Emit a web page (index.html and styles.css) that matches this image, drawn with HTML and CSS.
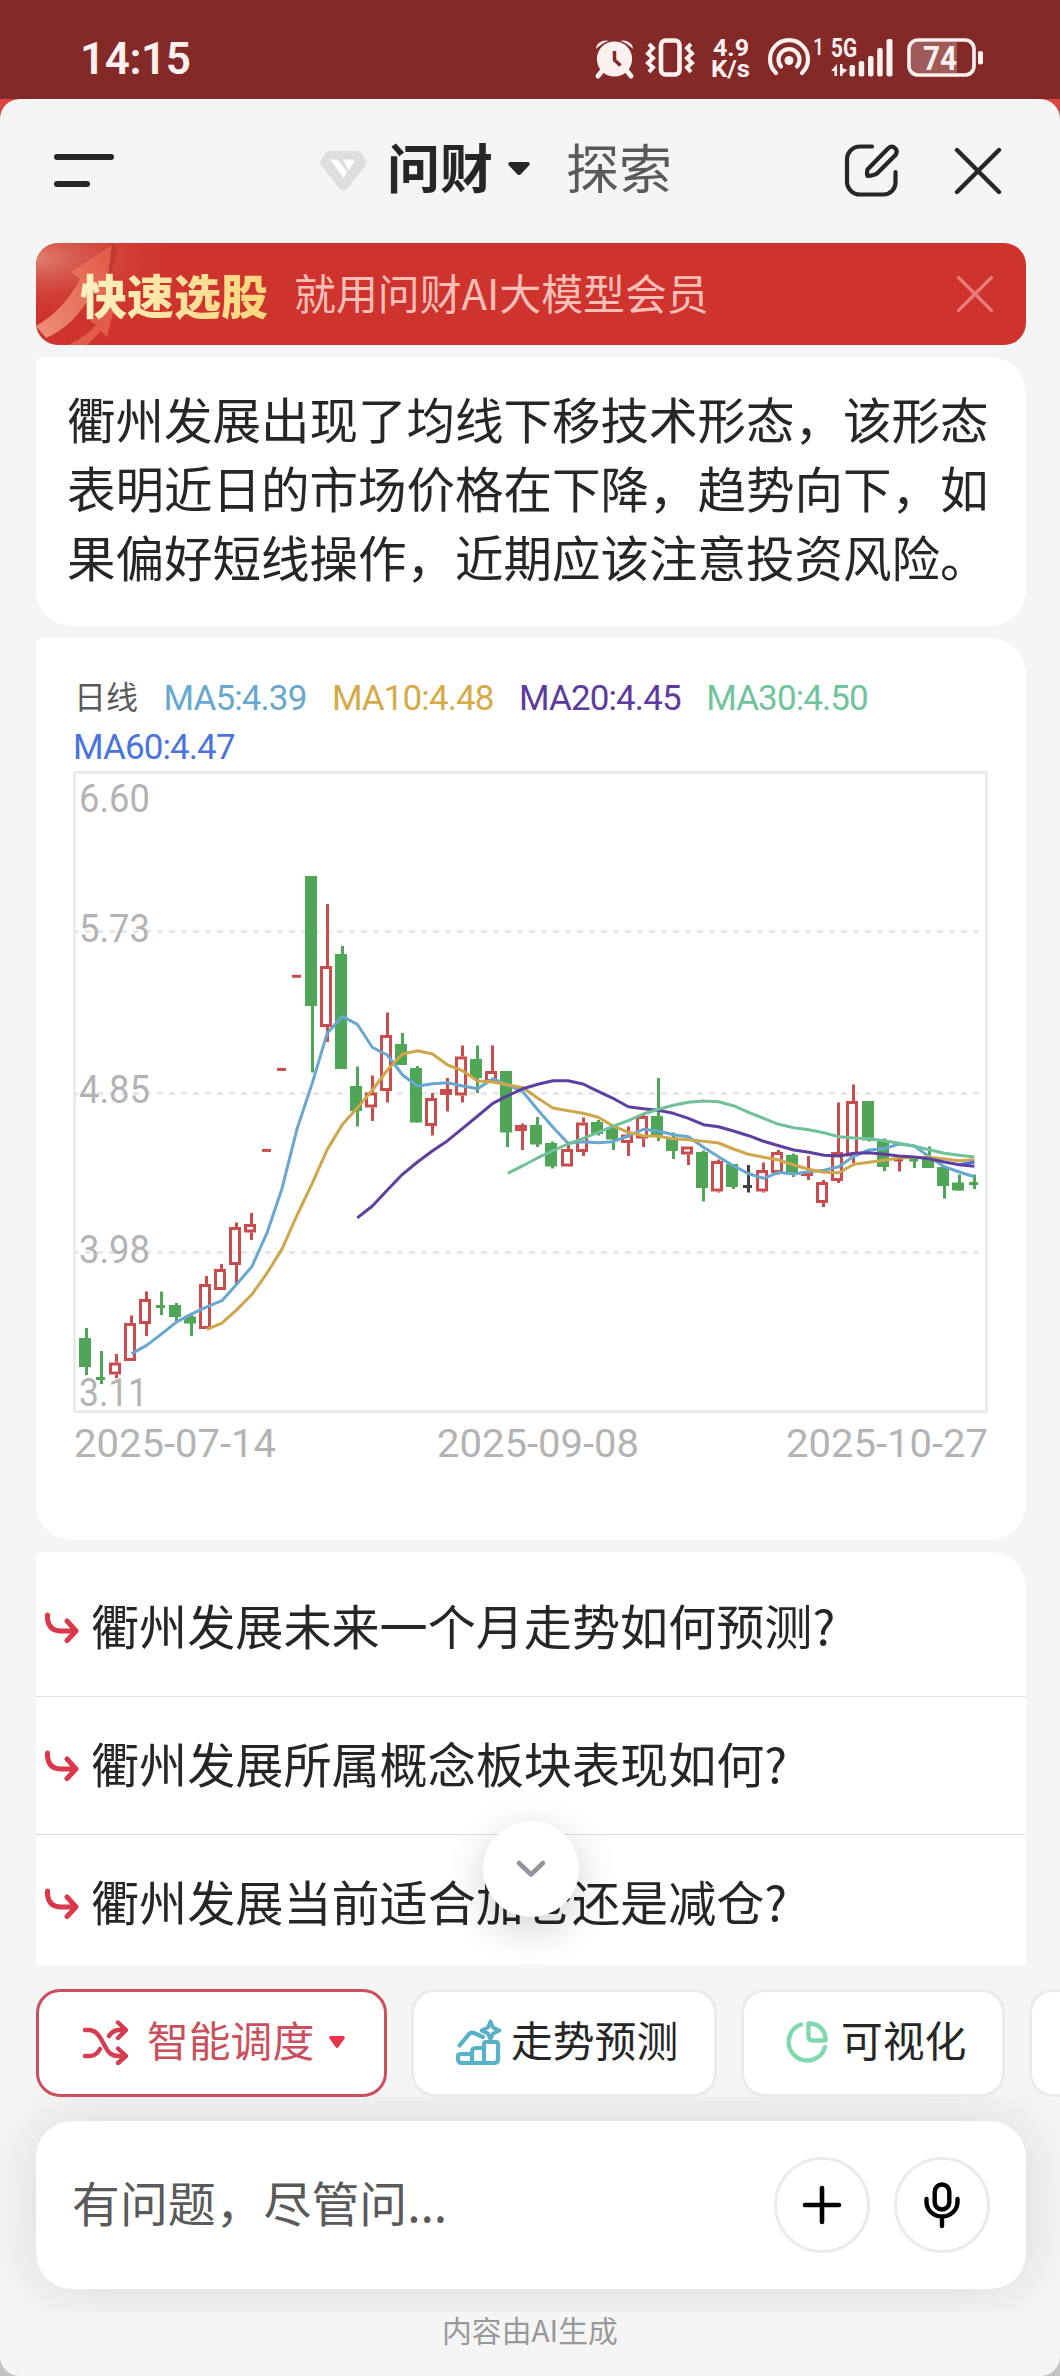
FILE: index.html
```html
<!DOCTYPE html>
<html lang="zh-CN">
<head>
<meta charset="utf-8">
<title>问财</title>
<link rel="stylesheet" href="styles.css">
</head>
<body>
<div class="phone">
  <div class="status">
    <span class="time">14:15</span>
    <svg class="status-icons" viewBox="590 30 400 54" width="400" height="54">
      <g fill="#fdf1f0">
        <circle cx="614.5" cy="59" r="17.6"/>
        <path d="M602 71l-4 5M627 71l4 5" stroke="#fdf1f0" stroke-width="5" stroke-linecap="round"/>
        <path d="M596 49c0-6 7-10 13-8c-5 1-9 4-13 8zM633 49c0-6-7-10-13-8c5 1 9 4 13 8z"/>
      </g>
      <path d="M614.5 51v9l6 5.500" fill="none" stroke="#832927" stroke-width="3.500"/>
      <g fill="none" stroke="#fdf1f0" stroke-width="4">
        <rect x="661" y="40.500" width="18.500" height="34" rx="4.500" stroke-width="4.600"/>
        <path d="M649 44l4 4-5 5.500 5 4.500-5 5 5 4.500-4 4.500M691 44l-4 4 5 5.500-5 4.500 5 5-5 4.500 4 4.500"/>
      </g>
      <g fill="#fdf1f0" font-family="Roboto, sans-serif" font-weight="700">
        <text x="713" y="56" font-size="23.500" textLength="36" lengthAdjust="spacingAndGlyphs">4.9</text>
        <text x="711" y="77" font-size="23" textLength="39" lengthAdjust="spacingAndGlyphs">K/s</text>
        <text x="813" y="55" font-size="24" textLength="11" lengthAdjust="spacingAndGlyphs" font-weight="500">1</text>
        <text x="831" y="57" font-size="25" textLength="26" lengthAdjust="spacingAndGlyphs">5G</text>
      </g>
      <g fill="none" stroke="#fdf1f0" stroke-width="4.200" stroke-linecap="round">
        <path d="M776 73a19 19 0 1 1 26 0"/>
        <path d="M781 66.500a10.500 10.500 0 1 1 16 0"/>
      </g>
      <circle cx="789" cy="60.500" r="4.500" fill="#fdf1f0"/>
      <g fill="#fdf1f0">
        <path d="M831 71l6-7v12h-2.500v-5zM840 64v12h2.500v-2l5-4-5-2v-4z"/>
        <rect x="849.500" y="65" width="5.500" height="11.500" rx="2"/>
        <rect x="858.700" y="61" width="5.500" height="15.500" rx="2"/>
        <rect x="868" y="56" width="5.500" height="20.500" rx="2"/>
        <rect x="877.200" y="48" width="5.500" height="28.500" rx="2"/>
        <rect x="886.500" y="39" width="6" height="37.500" rx="2"/>
      </g>
      <path d="M918 42h39v31h-39a7 7 0 0 1-7-7V49a7 7 0 0 1 7-7z" fill="#a05a58"/>
      <rect x="909" y="40" width="65" height="35" rx="9" fill="none" stroke="#fdf1f0" stroke-width="3.600"/>
      <rect x="978" y="51" width="5" height="13.500" rx="2" fill="#fdf1f0"/>
      <text x="923" y="70" font-family="Roboto, sans-serif" font-weight="700" font-size="34" textLength="34" lengthAdjust="spacingAndGlyphs" fill="#fdf1f0">74</text>
    </svg>
  </div>

  <div class="sheet-back">
  <div class="sheet">
    <header class="header">
      <svg class="menu" viewBox="0 0 60 36" width="60" height="36"><path d="M3 6h54M3 33h30" stroke="#262626" stroke-width="6" stroke-linecap="round"/></svg>
      <svg class="brand" viewBox="0 0 47 40" width="47" height="40">
        <path d="M10 0h27q3 0 4.500 2l4.500 7q1.500 3 0 5L28 37q-2 2.500-4.500 2.500T19 37L1 14q-1.500-2.500 0-5l4.500-7Q7 0 10 0z" fill="#dedede"/>
        <path d="M10 8.500h5.500q2 0 3 1.300L27 21l-3.500 6z" fill="#fff"/>
        <path d="M23 8.500h10q2 .5 1 2.500l-5.500 8.500z" fill="#fff"/>
      </svg>
      <span class="tab tab-on">问财</span>
      <svg class="tab-caret" viewBox="0 0 22 14" width="22" height="14"><path d="M2 0h18q3 1 1 3.500L13 12q-2 2-4 0L1 3.500Q-1 1 2 0z" fill="#262626"/></svg>
      <span class="tab">探索</span>
      <svg class="edit" viewBox="0 0 56 56" width="56" height="56" fill="none" stroke="#262626" stroke-width="4.200" stroke-linecap="round" stroke-linejoin="round">
        <path d="M28 3.500H16A13 13 0 0 0 3 16.500v22A13 13 0 0 0 16 51.500h23.500a12 12 0 0 0 12-12V29"/>
        <path d="M23.500 26.500L44 5.500c5-4.500 11 1 7.500 6.500L33 30.500q-3 2-9.500 2.500-1-3 0-6.500z"/>
      </svg>
      <svg class="close" viewBox="0 0 48 48" width="48" height="48"><path d="M3 3l42 42M45 3L3 45" stroke="#262626" stroke-width="4.400" stroke-linecap="round"/></svg>
    </header>

    <main class="feed">
      <div class="banner">
        <svg class="banner-art" viewBox="0 0 240 102" width="240" height="102">
          <defs>
            <radialGradient id="glow" cx="0" cy="0.150" r="0.600"><stop offset="0" stop-color="#e08070"/><stop offset="1" stop-color="#ce342d" stop-opacity="0"/></radialGradient>
            <linearGradient id="arrow" x1="0" y1="1" x2="1" y2="0"><stop offset="0" stop-color="#f19a80"/><stop offset="1" stop-color="#e55a45"/></linearGradient>
          </defs>
          <rect width="240" height="102" fill="url(#glow)"/>
          <path d="M4 97Q38 82 57 51l11 10L81 7l-5-6z" fill="#b8352a" opacity=".7"/>
          <path d="M0 83Q28 67 44 36l-9-7L76 2 69 57l-12-8Q38 83 10 95z" fill="url(#arrow)" opacity=".9"/>
          <path d="M32 102q20-10 28-20l-6-4 26-20-9 36-6-6q-8 8-14 14z" fill="#e05c49"/>
        </svg>
        <strong class="banner-title">快速选股</strong>
        <span class="banner-text">就用问财AI大模型会员</span>
        <svg class="banner-close" viewBox="0 0 38 38" width="38" height="38"><path d="M2.500 2.500l33 33M35.500 2.500l-33 33" stroke="#e77c79" stroke-width="3.200" stroke-linecap="round"/></svg>
      </div>

      <section class="card summary">衢州发展出现了均线下移技术形态，该形态表明近日的市场价格在下降，趋势向下，如果偏好短线操作，近期应该注意投资风险。</section>

      <section class="card chart-card">
        <div class="legend">
          <span class="lg-day">日线</span>
          <span class="lg ma5">MA5:4.39</span>
          <span class="lg ma10">MA10:4.48</span>
          <span class="lg ma20">MA20:4.45</span>
          <span class="lg ma30">MA30:4.50</span>
          <span class="lg ma60">MA60:4.47</span>
        </div>
        <svg id="chart" class="chart" viewBox="72 770 918 700" width="918" height="700"></svg>
      </section>

      <section class="card questions">
        <div class="question"><svg class="turn" viewBox="0 0 36 32" width="36" height="32"><path d="M3.500 3v4Q5 19 17 19h13M23 9l9 10-9 9.500" /></svg><span>衢州发展未来一个月走势如何预测?</span></div>
        <div class="question"><svg class="turn" viewBox="0 0 36 32" width="36" height="32"><path d="M3.500 3v4Q5 19 17 19h13M23 9l9 10-9 9.500" /></svg><span>衢州发展所属概念板块表现如何?</span></div>
        <div class="question question-last"><svg class="turn" viewBox="0 0 36 32" width="36" height="32"><path d="M3.500 3v4Q5 19 17 19h13M23 9l9 10-9 9.500" /></svg><span>衢州发展当前适合加仓还是减仓?</span></div>
        <div class="scroll-down"><svg viewBox="0 0 32 20" width="32" height="20"><path d="M4 4l12 11.500L28 4" fill="none" stroke="#93949b" stroke-width="4.600" stroke-linecap="round" stroke-linejoin="round"/></svg></div>
      </section>
    </main>

    <div class="chips">
      <div class="chip chip-on">
        <svg viewBox="0 0 46 46" width="46" height="46" fill="none" stroke="#d63c50" stroke-width="4.400" stroke-linecap="round" stroke-linejoin="round">
          <path d="M3 11h4q7 0 12 9l5 9q4 8 12 8h7M3 37h5q6 0 10-7M27 17q3-5 9-6h7M36 3.500l8 7.500-8 8M36 29.500l8 7.500-8 7"/>
        </svg>
        <span>智能调度</span>
        <svg class="chip-caret" viewBox="0 0 16 14" width="16" height="14"><path d="M1.500 0h13q2 1 1 2.500L9.500 11q-1.500 2-3 0L.5 2.500Q-.5 1 1.500 0z" fill="#e8344a"/></svg>
      </div>
      <div class="chip chip-trend">
        <svg viewBox="0 0 46 46" width="46" height="46" fill="none" stroke="#58b1c9" stroke-width="4.200" stroke-linecap="round" stroke-linejoin="round">
          <path d="M3.500 26.500L13 15q2-2 5-1l9 4"/>
          <path d="M34.500 2.500l2.500 6 6.500 3-6.500 3-2.500 6-2.500-6-6.500-3 6.500-3z" stroke-width="3.800"/>
          <path d="M16 44V33q0-4 4-4h8V25q0-2 2-2h10q2 0 2 2v15q0 4-4 4H6q-4 0-4-4v-3q0-2 3-2h11M28 29v15"/>
        </svg>
        <span>走势预测</span>
      </div>
      <div class="chip chip-visual">
        <svg viewBox="0 0 46 46" width="46" height="46" fill="none" stroke="#80d9ae" stroke-width="4.400" stroke-linecap="round" stroke-linejoin="round">
          <path d="M17 5.500A18.500 18.500 0 1 0 41 28"/>
          <path d="M24.500 4.500v13q0 4 4 4H41.500C42 11 34 4 24.500 4.500z"/>
        </svg>
        <span>可视化</span>
      </div>
      <div class="chip chip-next"></div>
    </div>

    <div class="composer">
      <div class="input">
        <span class="placeholder">有问题，尽管问...</span>
        <div class="round"><svg viewBox="0 0 40 40" width="40" height="40"><path d="M20 3v34M3 20h34" stroke="#000" stroke-width="4.600" stroke-linecap="round"/></svg></div>
        <div class="round"><svg viewBox="0 0 40 48" width="40" height="48" fill="none" stroke="#000" stroke-width="4.400" stroke-linecap="round"><rect x="12.700" y="3.500" width="14.600" height="25" rx="7.300"/><path d="M4.500 18v3a15.500 14.500 0 0 0 31 0v-3M20 36v9"/></svg></div>
      </div>
    </div>
    <footer class="note">内容由AI生成</footer>
  </div>
  </div>
</div>
<script src="chart.js"></script>
</body>
</html>
```
FILE: styles.css
```css
* { box-sizing: border-box; }
body {
  margin: 0;
  font-family: "Noto Sans CJK SC", sans-serif;
  color: #262626;
}
svg { display: block; flex: none; }
.phone { width: 1060px; height: 2376px; overflow: hidden; display: flex; flex-direction: column; background: #c9c9c9; }

.status { height: 99px; flex: none; background: #832927; display: flex; justify-content: space-between; align-items: center; padding: 15px 70px 0 80px; }
.time { font-family: Roboto, sans-serif; font-weight: 600; font-size: 44px; line-height: 54px; letter-spacing: -0.400px; color: #fdf1f0; padding-top: 3px; }

.sheet-back { flex: 1; background: linear-gradient(#d9453f 0 60px, #c4c4c4 60px); }
.sheet { height: 2277px; background: #f5f5f5; border-radius: 20px; overflow: hidden; display: flex; flex-direction: column; }

.header { height: 144px; flex: none; display: flex; align-items: center; padding: 0 58px 0 54px; }
.menu { margin-bottom: 4px; }
.brand { margin-left: 206px; }
.tab { font-size: 53px; line-height: 60px; color: #5a5a5a; margin-bottom: 11px; }
.tab-on { font-weight: 700; color: #262626; margin-left: 20px; }
.tab-caret { margin: 0 36px 4px 15px; }
.edit { margin-left: auto; margin-right: 2px; }
.close { margin-left: 52px; }

.feed { height: 1722px; flex: none; padding: 0 34px 0 36px; display: flex; flex-direction: column; gap: 12px; }

.banner { position: relative; height: 102px; flex: none; border-radius: 22px; overflow: hidden; background: #ce342d; display: flex; align-items: center; padding: 0 32px 0 44px; }
.banner-art { position: absolute; left: 0; top: 0; }
.banner-title { position: relative; font-size: 47px; line-height: 60px; font-weight: 900; background: linear-gradient(90deg, #fff0c4, #fbd67a); -webkit-background-clip: text; background-clip: text; color: transparent; }
.banner-text { margin-left: 26px; margin-bottom: 4px; font-size: 41.900px; line-height: 60px; color: #fbbfb8; }
.banner-close { margin-left: auto; }

.card { background: #fff; border-radius: 6px 36px 36px 36px; flex: none; }
.summary { height: 269px; padding: 27px 30px 0 31px; font-size: 48.500px; line-height: 69px; word-break: break-all; }

.chart-card { height: 902px; padding: 36px 36px 0; }
.legend { display: flex; flex-wrap: wrap; column-gap: 25.500px; height: 96px; font-family: Roboto, "Noto Sans CJK SC", sans-serif; font-size: 35px; line-height: 49px; padding-left: 1px; }
.lg-day { font-size: 32px; color: #5a5a5a; margin-left: 1px; }
.lg { letter-spacing: -0.900px; }
.ma5 { color: #68a7cf; }
.ma10 { color: #d6aa48; }
.ma20 { color: #5d3b9e; }
.ma30 { color: #70c49b; }
.ma60 { color: #4a74dc; }
.chart text { font-family: Roboto, sans-serif; font-size: 38px; fill: #b3b3b3; }

.questions { position: relative; height: 413px; border-radius: 6px 36px 0 0; padding-top: 7px; }
.question { height: 138px; display: flex; align-items: center; padding-left: 8px; font-size: 48.100px; line-height: 60px; border-bottom: 1px solid #dedede; }
.question span { margin: 0 0 8px 11px; }
.question-last { border-bottom: 0; height: 130px; padding-top: 8px; }
.turn { fill: none; stroke: #dc384c; stroke-width: 5; stroke-linecap: round; stroke-linejoin: round; }
.scroll-down { position: absolute; left: 447px; top: 269px; width: 96px; height: 96px; border-radius: 50%; background: #fff; box-shadow: 0 12px 42px rgba(0, 0, 0, .19); display: flex; align-items: center; justify-content: center; }

.chips { height: 132px; flex: none; display: flex; gap: 24px; padding: 24px 0 0 36px; }
.chip { height: 108px; flex: none; display: flex; align-items: center; background: #fff; border: 3px solid #ebebeb; border-radius: 24px; font-size: 41.800px; line-height: 60px; }
.chip span { margin-bottom: 9px; }
.chip svg { margin-bottom: 2px; }
.chip-on { width: 351px; border-color: #c9505c; color: #c9505c; padding-left: 43px; gap: 19px; }
.chip .chip-caret { margin: 0 0 0 -4px; }
.chip-trend { width: 306px; padding-left: 42px; gap: 9px; }
.chip-visual { width: 264px; padding-left: 40px; gap: 11px; }
.chip-next { width: 200px; }

.composer { height: 215px; flex: none; overflow: hidden; padding: 24px 34px 0 36px; }
.input { height: 168px; border-radius: 36px; background: #fff; box-shadow: 0 0 60px rgba(0, 0, 0, .12); display: flex; align-items: center; padding: 0 36px 0 36px; gap: 24px; }
.placeholder { flex: 1; font-size: 47.900px; line-height: 60px; color: #5a5a5a; margin-bottom: 9px; }
.round { width: 96px; height: 96px; border: 3px solid #ebebeb; border-radius: 50%; display: flex; align-items: center; justify-content: center; }
.note { text-align: center; font-size: 29.800px; line-height: 34px; color: #999; }
```
FILE: chart.js
```js
const X0 = 86.4, STEP = 15.05;
// kind (r: rise, g: fall, d: doji green, e: doji red, k: flat), body top, body bottom, wick top, wick bottom
const candles = [
  ['g',1338,1367,1328,1375],['d',1378.5,0,1351,1384],['r',1362.500,1374.500,1354,1378],['r',1323,1361,1315.500,1361],
  ['r',1299,1324,1291.500,1336],['d',1306.500,0,1291.500,1315],['g',1305,1317,1303,1322],['g',1316.500,1323.500,1313,1336],
  ['r',1284,1329,1276,1329],['r',1269,1290,1264,1290],['r',1227,1265,1222.500,1285],['r',1224,1232.500,1213,1240],
  ['e',1150.400,0,0,0],['e',1069.400,0,0,0],['e',976.300,0,0,0],
  ['g',876,1006,876,1072.500],['r',966,1027,904,1042],['g',954,1069,946,1069],['g',1086,1111,1066.500,1126.500],
  ['r',1092.500,1107.500,1075.500,1121],['r',1035,1091,1012.500,1102.500],['g',1044,1065,1033,1065],['g',1068,1122.500,1066,1122.500],
  ['r',1098,1126,1093,1135.500],['r',1089,1095,1078,1111.500],['r',1056.500,1095.500,1045.500,1102.500],['g',1059,1078,1045.500,1093],
  ['r',1071,1082,1045.500,1082],['g',1071,1132.500,1071,1147],['r',1125,1131,1123.500,1150],['g',1125,1144.500,1117,1147],
  ['g',1143,1166.500,1141.500,1168.500],['r',1149,1166.500,1143,1166.500],['r',1122.500,1152,1117.500,1156],['g',1122,1134,1120,1135.500],
  ['g',1127.500,1139.500,1127.500,1150],['r',1134.500,1143,1126.500,1156],['r',1116,1138.500,1113,1147],['g',1116,1135.500,1078,1141],
  ['g',1137.500,1151,1132.500,1159],['r',1146.500,1154.500,1146.500,1165],['g',1152,1188,1150.500,1201.500],['r',1161,1191.500,1159.500,1192.500],
  ['g',1164,1187,1164,1189],['k',1186.500,0,1165,1192.500],['r',1170,1191.500,1162.500,1192.500],['r',1152,1173,1150,1174.500],
  ['g',1155,1174.500,1153.500,1177],['r',1172,1175.500,1156,1180],['r',1182,1203,1180,1207],['r',1152,1181,1102.500,1183],
  ['r',1101,1156.500,1084.500,1163],['g',1101,1140.500,1101,1141.500],['g',1140.500,1167,1138.500,1171],['e',1160,0,1160,1171.500],
  ['d',1160,0,1160,1168],['g',1157.500,1168,1146.500,1168],['g',1167,1186,1167,1198.500],['g',1182.500,1190.500,1174.500,1190.500],
  ['d',1183.500,0,1174.500,1189]
];
// Each moving average: first candle index, stroke colour, y values
const averages = [
  [3,'#68a7cf',[1353.6,1345.4,1333.9,1321.8,1313.9,1306.8,1300.7,1283.9,1266.4,1232.9,1188.2,1128.6,1083.6,1033.2,1016.4,1024.3,1047.5,1055,1075,1086,1083.7,1082.7,1086,1088.7,1078.7,1085,1091.7,1110,1127.3,1143.3,1141.7,1142.7,1141.7,1136,1129.3,1131,1134.7,1136.7,1147.3,1156.7,1166,1173.7,1178.3,1172.3,1174,1171.7,1170.3,1166.7,1156,1150,1148.7,1144,1145.7,1156.7,1166.7,1172,1176.7]],
  [8,'#d0a64b',[1329.3,1323.2,1309.6,1294.3,1273.2,1248.9,1215,1183.6,1149.6,1124.6,1107.9,1090,1070,1054,1050.7,1054,1065,1070.7,1081,1082,1084.7,1087.7,1098.3,1108,1110.7,1113.3,1117.3,1126,1132.3,1135.7,1136.3,1138.7,1139.7,1141.3,1143,1149,1154.3,1157.3,1160,1165,1169.3,1172.3,1172.7,1164.3,1162.3,1160.3,1158,1157.5,1157.3,1159,1160.7,1159.7]],
  [58,'#4a74dc',[1164.7,1162]],
  [18,'#5d3fa0',[1217.9,1206,1190,1174.3,1162,1150.7,1140.7,1128.3,1116,1103.3,1095.7,1088.7,1084.3,1080.7,1080.7,1084,1091.3,1098.3,1106.7,1108.7,1110.3,1113.3,1118.3,1124.7,1126.7,1131,1135.7,1141.3,1145.7,1150,1152.3,1155.3,1156,1153.3,1152.7,1154.3,1156,1157,1158.7,1162,1164.7,1166.3]],
  [28,'#70c09a',[1173.3,1165.7,1157.7,1150.7,1144,1138.3,1132.3,1126.3,1120.7,1114,1109.3,1105.3,1102.3,1101,1101.7,1105.7,1112.3,1118.3,1124.3,1127.7,1129.7,1132.7,1136.7,1138,1138.7,1140.7,1143.3,1146.3,1149.7,1153.3,1155.3,1157]]
];
const colors = { r: '#cb4c4c', e: '#c94c4c', g: '#4fa657', d: '#4fa657', k: '#404040' };
const line = (x1, y1, x2, y2, c, extra = '') => `<line x1="${x1}" y1="${y1}" x2="${x2}" y2="${y2}" stroke="${c}" stroke-width="3" ${extra}/>`;
const label = (x, y, w, s) => `<text x="${x}" y="${y}" textLength="${w}" lengthAdjust="spacingAndGlyphs">${s}</text>`;

let out = '<rect x="74.5" y="772.5" width="912" height="639" rx="1" fill="none" stroke="#ebebeb" stroke-width="3"/>';
for (const y of [931.5, 1093.5, 1252.5]) out += line(73, y, 979, y, '#e8e8e8', 'stroke-dasharray="6 6"');
out += label(79, 812, 71, '6.60') + label(79, 942, 71, '5.73') + label(79, 1103, 71, '4.85')
     + label(79, 1263, 71, '3.98') + label(79, 1406, 69, '3.11')
     + label(74, 1457, 202, '2025-07-14') + label(437, 1457, 202, '2025-09-08') + label(786, 1457, 202, '2025-10-27');

candles.forEach(([k, top, bottom, high, low], i) => {
  const x = Math.floor(X0 + i * STEP) + 0.5, c = colors[k];
  if ('dek'.includes(k)) {
    out += line(x - 5.5, top, x + 3.5, top, c);
    if (high) out += line(x, high, x, low, c);
  } else if (k === 'g') {
    out += line(x, high, x, low, c) + `<rect x="${x - 7.5}" y="${top}" width="12" height="${bottom - top}" fill="${c}"/>`;
  } else {
    out += line(x, high, x, top, c) + line(x, bottom, x, low, c)
         + `<rect x="${x - 6}" y="${top + 1.5}" width="9" height="${Math.max(bottom - top - 3, 1)}" fill="none" stroke="${c}" stroke-width="3"/>`;
  }
});
for (const [start, c, ys] of averages) {
  const pts = ys.map((y, i) => `${(X0 + (start + i) * STEP).toFixed(1)},${y}`).join(' ');
  out += `<polyline points="${pts}" fill="none" stroke="${c}" stroke-width="3" stroke-linejoin="round"/>`;
}
document.getElementById('chart').innerHTML = out;
```
